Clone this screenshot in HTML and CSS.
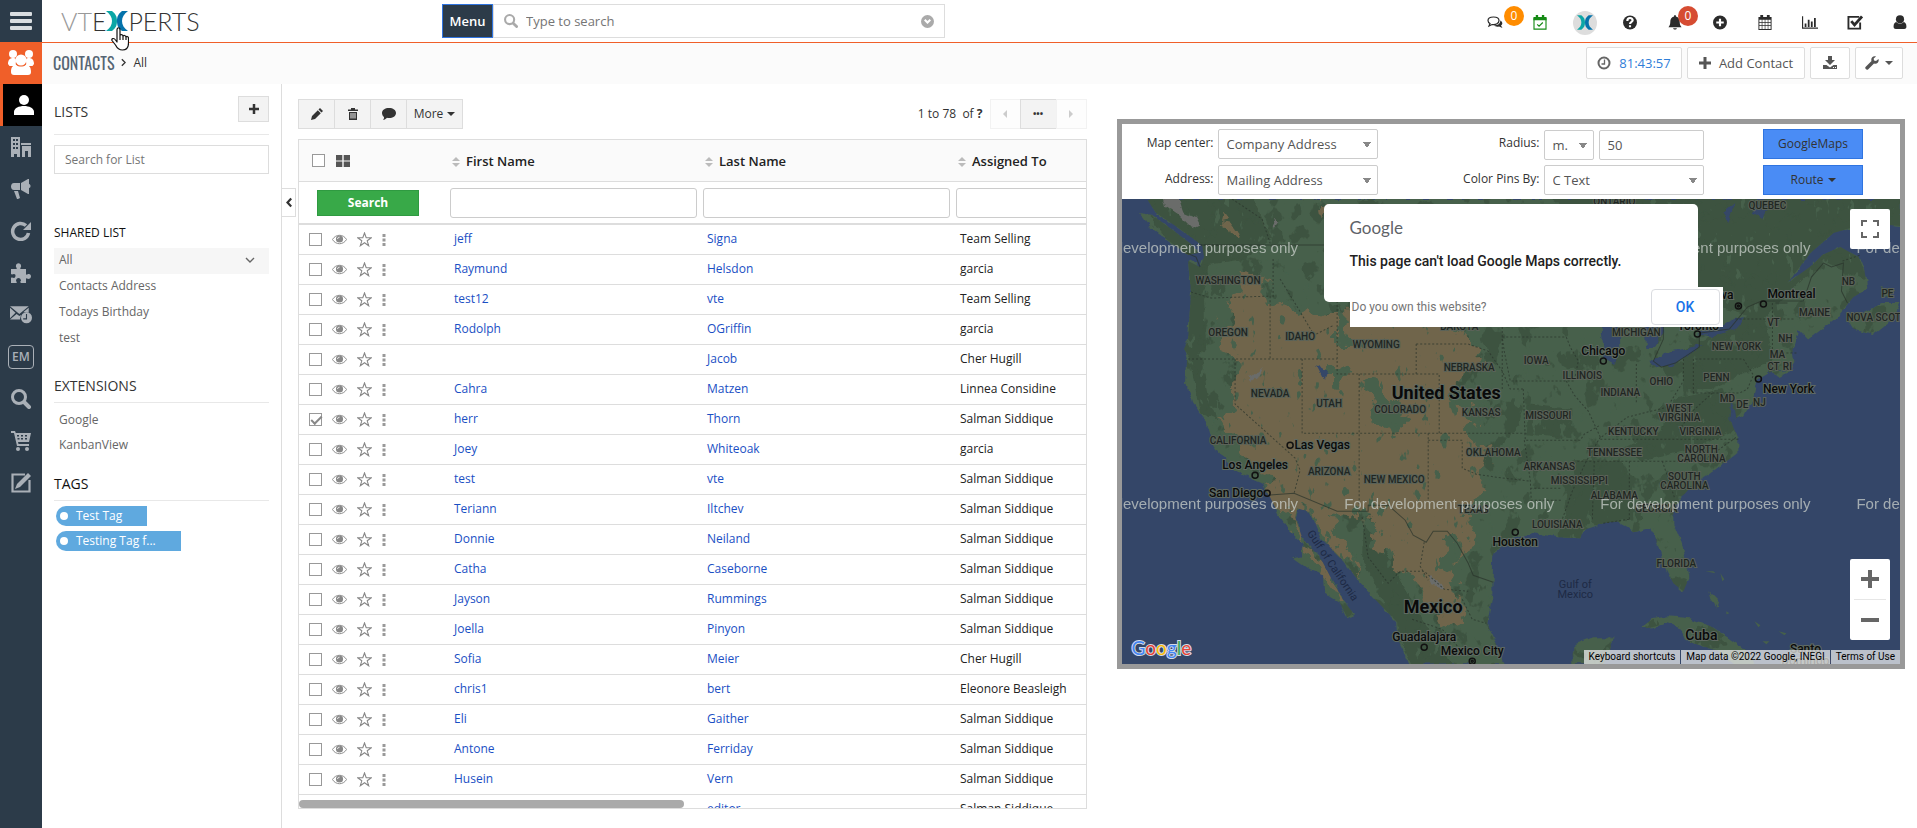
FILE: index.html
```html
<!DOCTYPE html>
<html lang="en">
<head>
    <meta charset="UTF-8">
    <meta name="viewport" content="width=device-width, initial-scale=1.0">
    <title>Contacts - All</title>
    <link rel="stylesheet" href="styles.css">
</head>
<body>
    <!-- Icon sprite -->
    <svg class="sprite" aria-hidden="true">
        <symbol id="i-bars" viewBox="0 0 22 18"><path d="M1 0h20a1 1 0 0 1 1 1v2a1 1 0 0 1-1 1H1a1 1 0 0 1-1-1V1a1 1 0 0 1 1-1zM1 7h20a1 1 0 0 1 1 1v2a1 1 0 0 1-1 1H1a1 1 0 0 1-1-1V8a1 1 0 0 1 1-1zM1 14h20a1 1 0 0 1 1 1v2a1 1 0 0 1-1 1H1a1 1 0 0 1-1-1v-2a1 1 0 0 1 1-1z"/></symbol>
        <symbol id="i-group" viewBox="0 0 26 26"><circle cx="5" cy="4" r="4"/><circle cx="21" cy="4" r="4"/><path d="M0 14c0-4 2-6 5-6s3 1 3 3-1 3 1 5H1.500zM26 14c0-4-2-6-5-6s-3 1-3 3 1 3-1 5h7.500z"/><circle cx="13" cy="10" r="5.500"/><path d="M3 22c0-5 2-7 5-7 3 2 7 2 10 0 3 0 5 2 5 7 0 2-1 3-3 3H6c-2 0-3-1-3-3z"/></symbol>
        <symbol id="i-person" viewBox="0 0 20 20"><circle cx="10" cy="5" r="5"/><path d="M0 20v-3c0-4 5-6 10-6s10 2 10 6v3z"/></symbol>
        <symbol id="i-building" viewBox="0 0 20 20"><path fill-rule="evenodd" d="M0 0h9v20H6v-3H3v3H0zM2 2v2h2V2zm3 0v2h2V2zM2 6v2h2V6zm3 0v2h2V6zm-3 4v2h2v-2zm3 0v2h2v-2zM10 6h10v2H10zM11 9h9v11h-3v-6h-3v6h-3z"/></symbol>
        <symbol id="i-horn" viewBox="0 0 20 20"><path d="M17 0h1v5c2 0 2 4 0 4v6h-1L10 11V4zM3 4h6v7H3C-1 11-1 4 3 4zM3 12h4l2 7-2 1H6z"/></symbol>
        <symbol id="i-redo" viewBox="0 0 20 20"><path fill="none" stroke="currentColor" stroke-width="3.500" d="M17.500 12A8 8 0 1 1 15 4.500"/><path d="M20 1v8h-8z"/></symbol>
        <symbol id="i-puzzle" viewBox="0 0 20 20"><path d="M0 6h5c1 0 1-1 0-2-1-5 6-5 5 0-1 1-1 2 0 2h5v5c0 1 1 1 2 0 4-1 4 5 0 5-1-1-2-1-2 0v4h-5c-1-1-1-2 0-2 0-4-5-4-5 0 1 1 1 2 0 2H0v-5c1-1 2 0 3 0 2-1 2-4 0-4-1 0-2 1-3 0z"/></symbol>
        <symbol id="i-mailclock" viewBox="0 0 20 16"><path d="M0 0h17l-8.500 7zM0 1.500l5 4.500-5 5zM17 1.500V6l-5-.500zM6 7l2.500 2L10 8l-1 4H0z"/><path fill-rule="evenodd" d="M15 5.500a5 5 0 1 1 0 10 5 5 0 0 1 0-10zm.500 1.500h-1v4H12v1h3.500z"/></symbol>
        <symbol id="i-search" viewBox="0 0 20 20"><circle cx="8" cy="8" r="6.500" fill="none" stroke="currentColor" stroke-width="3"/><path stroke="currentColor" stroke-width="4" stroke-linecap="round" d="M13.500 13.500l4.500 4.500"/></symbol>
        <symbol id="i-cart" viewBox="0 0 20 20"><path fill-rule="evenodd" d="M0 0h4l.800 2H20l-2 9H7l.500 2H18v2H6L3 2H0zM6 4v1.500h2V4zm4 0v1.500h2V4zm4 0v1.500h2V4zM6.500 7v1.500h2V7zM10 7v1.500h2V7zm4 0v1.500h2V7z"/><circle cx="7" cy="18" r="2"/><circle cx="16" cy="18" r="2"/></symbol>
        <symbol id="i-edit" viewBox="0 0 20 20"><path fill="none" stroke="currentColor" stroke-width="2.200" d="M14 1.500H1.500v17h17V7"/><path d="M17 0l3 3L9 14l-5 2 2-5z"/></symbol>
        <symbol id="i-x" viewBox="0 0 22 20"><path fill="#0ba6a6" d="M0 0h6c4 3 5 6 5 10s-1 7-5 10H0c4-3 6-6 6-10S4 3 0 0z"/><path fill="#0473ab" d="M22 0h-6c-4 3-5 6-5 10s1 7 5 10h6c-4-3-6-6-6-10s2-7 6-10z"/></symbol>
        <symbol id="i-chat" viewBox="0 0 16 14"><path fill="none" stroke="currentColor" stroke-width="1.200" d="M6.500 1.500C3 1.500 1 3 1 5s1 2.500 2 3l-1 2.500L5 9c4 .500 7-1 7-4 0-2-2-3.500-5.500-3.500z"/><path d="M13.300 5c2 1 3 3.500.700 5l1.500 2.500-3.500-1.500c-2 .500-4 0-5-1 4 0 6.500-2 6.300-5z"/></symbol>
        <symbol id="i-calcheck" viewBox="0 0 16 16"><path fill="none" stroke="currentColor" stroke-width="1.200" d="M1.600 4h12.800v11H1.600zM5 10l2 2L11 8"/><path d="M1 2h14v3.500H1zM3.500 0h2.500v3H3.500zM10 0h2.500v3H10z"/></symbol>
        <symbol id="i-help" viewBox="0 0 14 14"><circle cx="7" cy="7" r="6.500"/><path fill="none" stroke="#fff" stroke-width="2" d="M4.500 5.500C4.500 2 9.500 2 9.500 5c0 1.500-2.500 1.500-2.500 3.500M7 9.500v2"/></symbol>
        <symbol id="i-bell" viewBox="0 0 14 16"><path d="M7 0c1 0 1 1 1 1.500 3 .500 4 3 4 5.500 0 3 .500 4.500 2 6H0c1.500-1.500 2-3 2-6 0-2.500 1-5 4-5.500C6 1 6 0 7 0zM5 14h4c0 2-4 2-4 0z"/></symbol>
        <symbol id="i-pluscircle" viewBox="0 0 14 14"><path fill-rule="evenodd" d="M7 .500a6.500 6.500 0 1 1 0 13 6.500 6.500 0 0 1 0-13zM6 3.500V6H3.500v2H6v2.500h2V8h2.500V6H8V3.500z"/></symbol>
        <symbol id="i-calendar" viewBox="0 0 16 16"><path fill-rule="evenodd" d="M1 2h2V0h3v2h4V0h3v2h2v14H1zm1 3v2.500h2.500V5zm3.200 0v2.500h2.500V5zm3.200 0v2.500h2.500V5zm3.200 0v2.500H14V5zM2 8.300v2.700h2.500V8.300zm3.200 0v2.700h2.500V8.300zm3.200 0v2.700h2.500V8.300zm3.200 0v2.700H14V8.300zM2 11.800V15h2.500v-3.200zm3.200 0V15h2.500v-3.200zm3.200 0V15h2.500v-3.200zm3.200 0V15H14v-3.200z"/></symbol>
        <symbol id="i-chart" viewBox="0 0 18 14"><path d="M0 0h1.300v12.700H18V14H0zM3 8h2v4H3zM6.500 4h2v8h-2zM10 6h2v6h-2zM13.500 2h2v10h-2z"/></symbol>
        <symbol id="i-check" viewBox="0 0 17 16"><path fill="none" stroke="currentColor" stroke-width="2" d="M13 2H1.500v12.500H14V8"/><path fill="none" stroke="currentColor" stroke-width="3" d="M4.500 6.500l3.500 4L16 1.500"/></symbol>
        <symbol id="i-user" viewBox="0 0 14 14"><circle cx="7" cy="4" r="3.800"/><path d="M1 11c0-3 1-4 2.500-4.500 2 2 5 2 7 0C12 7 13 8 13 11c0 1.500-1 2-2 2H3c-1 0-2-.500-2-2z"/></symbol>
        <symbol id="i-clock" viewBox="0 0 14 14"><circle cx="7" cy="7" r="5.500" fill="none" stroke="currentColor" stroke-width="2"/><path fill="none" stroke="currentColor" stroke-width="1.300" d="M7.500 3.500V8H4.500"/></symbol>
        <symbol id="i-plus" viewBox="0 0 12 12"><path d="M4.500 0h3v4.500H12v3H7.500V12h-3V7.500H0v-3h4.500z"/></symbol>
        <symbol id="i-download" viewBox="0 0 14 14"><path fill-rule="evenodd" d="M5 0h4v4h3L7 9 2 4h3zM0 9h3.500L7 11.500 10.500 9H14v4H0zm10 2v1h1v-1zm2 0v1h1v-1z"/></symbol>
        <symbol id="i-wrench" viewBox="0 0 14 14"><path d="M13.500 3L11 5 9 4.500 8.700 2.500 11 .500C8 -.500 5.500 2 6.500 5L.500 11c-1 1.500 1 3.500 2.500 2.500L9 7.500c3 1 5.500-1.500 4.500-4.500z"/></symbol>
        <symbol id="i-pencil" viewBox="0 0 12 12"><path d="M9 0l3 3-1.500 1.500-3-3zM6.800 2.200l3 3L4 11l-4 1 1-4z"/></symbol>
        <symbol id="i-trash" viewBox="0 0 10 12"><path fill-rule="evenodd" d="M3 0h4v1.500h3V3H0V1.500h3zM1 4h8v8H1zm1.500 1v5.500h1V5zm2 0v5.500h1V5zm2 0v5.500h1V5z"/></symbol>
        <symbol id="i-comment" viewBox="0 0 14 12"><path d="M7 0c4 0 7 2 7 5s-3 5-7 5c-1 0-1.500 0-2-.200C4 11 2.500 12 1 12c1-1 1-2 1-3C.700 8 0 6.500 0 5c0-3 3-5 7-5z"/></symbol>
        <symbol id="i-eye" viewBox="0 0 16 11"><path fill="none" stroke="currentColor" d="M.500 5.500C4-.500 12-.500 15.500 5.500 12 11.500 4 11.500.500 5.500z"/><circle cx="8" cy="5" r="3.800"/><path fill="none" stroke="#fff" d="M6 5c0-1.500 1-2 2-2"/></symbol>
        <symbol id="i-star" viewBox="0 0 15 15"><path fill="none" stroke="currentColor" stroke-width="1.100" d="M7.500 1l1.700 4.700 5 .100-4 3 1.500 5-4.200-3-4.200 3 1.500-5-4-3 5-.100z"/></symbol>
        <symbol id="i-dots" viewBox="0 0 4 12"><path d="M.500 0h3v3h-3zM.500 4.500h3v3h-3zM.500 9h3v3h-3z"/></symbol>
        <symbol id="i-grid" viewBox="0 0 14 12"><path d="M0 0h6.300v5.500H0zM7.700 0H14v5.500H7.700zM0 6.500h6.300V12H0zM7.700 6.500H14V12H7.700z"/></symbol>
        <symbol id="i-sort" viewBox="0 0 8 12"><path d="M4 1l4 4H0zM0 7h8l-4 4z"/></symbol>
        <symbol id="i-left" viewBox="0 0 6 10"><path fill="none" stroke="currentColor" stroke-width="2.200" d="M5.200 1L1.500 5l3.700 4"/></symbol>
        <symbol id="i-right" viewBox="0 0 6 10"><path fill="none" stroke="currentColor" stroke-width="1.600" d="M1 1l4 4-4 4"/></symbol>
        <symbol id="i-down" viewBox="0 0 10 6"><path fill="none" stroke="currentColor" stroke-width="1.400" d="M1 1l4 4 4-4"/></symbol>
        <symbol id="i-down-bold" viewBox="0 0 10 7"><path fill="none" stroke="currentColor" stroke-width="3" d="M1 1l4 4 4-4"/></symbol>
    </svg>

    <div class="app">
        <nav class="rail" aria-label="Modules">
            <button class="rail-item" aria-label="Toggle menu"><svg class="ico-22"><use href="#i-bars"/></svg></button>
            <a href="#" class="rail-item app-home" aria-label="Marketing"><svg class="ico-26"><use href="#i-group"/></svg></a>
            <a href="#" class="rail-item active" aria-label="Contacts"><svg class="ico-22"><use href="#i-person"/></svg></a>
            <a href="#" class="rail-item" aria-label="Organizations"><svg class="ico-22"><use href="#i-building"/></svg></a>
            <a href="#" class="rail-item" aria-label="Campaigns"><svg class="ico-22"><use href="#i-horn"/></svg></a>
            <a href="#" class="rail-item" aria-label="Refresh"><svg class="ico-22"><use href="#i-redo"/></svg></a>
            <a href="#" class="rail-item" aria-label="Extensions"><svg class="ico-22"><use href="#i-puzzle"/></svg></a>
            <a href="#" class="rail-item" aria-label="Scheduled mail"><svg class="ico-22"><use href="#i-mailclock"/></svg></a>
            <a href="#" class="rail-item"><span class="em">EM</span></a>
            <a href="#" class="rail-item" aria-label="Search"><svg class="ico-22"><use href="#i-search"/></svg></a>
            <a href="#" class="rail-item" aria-label="Orders"><svg class="ico-22"><use href="#i-cart"/></svg></a>
            <a href="#" class="rail-item" aria-label="Notes"><svg class="ico-22"><use href="#i-edit"/></svg></a>
        </nav>

        <div class="page">
            <header class="topbar">
                <a href="#" class="logo" aria-label="VTExperts">
                    <span class="logo-light">VT</span><span>E</span><svg class="logo-x"><use href="#i-x"/></svg><span>PERTS</span>
                    <svg class="cursor" viewBox="0 0 18 24"><path fill="#fff" stroke="#111" stroke-width="1.200" stroke-linejoin="round" d="M6 15V3c0-3 3-3 3 0v6c0-2 3-2 3 .500C12 8 15 8 15 10.500c0-1.500 2.500-1.500 2.500 1V16c0 4-1.500 7-6 7-4 0-5.500-2-7-5L1 13.500C0 11.500 3 10.500 4.500 13zM9 9v4M12 9.500V13M15 10.500V13"/></svg>
                </a>
                <form class="search">
                    <button type="button" class="menu-btn">Menu</button>
                    <div class="search-box">
                        <svg class="ico-14"><use href="#i-search"/></svg>
                        <input type="text" placeholder="Type to search" aria-label="Type to search">
                        <button type="button" class="search-more" aria-label="Advanced search"><svg><use href="#i-down-bold"/></svg></button>
                    </div>
                </form>
                <div class="tools">
                    <a href="#" aria-label="Chat"><svg><use href="#i-chat"/></svg><span class="badge">0</span></a>
                    <a href="#" class="green" aria-label="Tasks"><svg><use href="#i-calcheck"/></svg></a>
                    <a href="#" class="brand" aria-label="VTExperts store"><svg><use href="#i-x"/></svg></a>
                    <a href="#" aria-label="Help"><svg><use href="#i-help"/></svg></a>
                    <a href="#" aria-label="Notifications"><svg><use href="#i-bell"/></svg><span class="badge red">0</span></a>
                    <a href="#" aria-label="Quick create"><svg><use href="#i-pluscircle"/></svg></a>
                    <a href="#" aria-label="Calendar"><svg><use href="#i-calendar"/></svg></a>
                    <a href="#" aria-label="Reports"><svg><use href="#i-chart"/></svg></a>
                    <a href="#" aria-label="To do"><svg><use href="#i-check"/></svg></a>
                    <a href="#" aria-label="Account"><svg><use href="#i-user"/></svg></a>
                </div>
            </header>

            <div class="subbar">
                <div class="crumbs">
                    <a href="#" class="module">CONTACTS</a>
                    <svg class="crumb-sep"><use href="#i-right"/></svg>
                    <a href="#">All</a>
                </div>
                <div class="actions">
                    <button class="timer"><svg class="ico-14"><use href="#i-clock"/></svg>81:43:57</button>
                    <button class="add"><svg class="ico-12"><use href="#i-plus"/></svg>Add Contact</button>
                    <button class="download" aria-label="Import"><svg class="ico-14"><use href="#i-download"/></svg></button>
                    <button class="wrench" aria-label="Customize"><svg class="ico-14"><use href="#i-wrench"/></svg><span class="caret"></span></button>
                </div>
            </div>

            <div class="body">
                <aside class="sidebar">
                    <div class="side-head">
                        <h2>LISTS</h2>
                        <button class="btn" aria-label="Add list"><svg class="ico-10"><use href="#i-plus"/></svg></button>
                    </div>
                    <input class="side-search" type="text" placeholder="Search for List" aria-label="Search for List">
                    <h3>SHARED LIST</h3>
                    <ul class="side-list">
                        <li class="selected"><a href="#">All</a><svg class="ico-10"><use href="#i-down"/></svg></li>
                        <li><a href="#">Contacts Address</a></li>
                        <li><a href="#">Todays Birthday</a></li>
                        <li><a href="#">test</a></li>
                    </ul>
                    <h2 class="side-title">EXTENSIONS</h2>
                    <ul class="side-list compact">
                        <li><a href="#">Google</a></li>
                        <li><a href="#">KanbanView</a></li>
                    </ul>
                    <h2 class="side-title tags-title">TAGS</h2>
                    <div class="tags">
                        <a href="#" class="tag">Test Tag</a>
                        <a href="#" class="tag">Testing Tag f...</a>
                    </div>
                    <button class="collapse" aria-label="Collapse sidebar"><svg><use href="#i-left"/></svg></button>
                </aside>

                <main class="content">
                    <section class="list">
                        <div class="list-bar">
                            <div class="btn-group">
                                <button class="btn" aria-label="Edit"><svg class="ico-12"><use href="#i-pencil"/></svg></button>
                                <button class="btn" aria-label="Delete"><svg class="ico-12"><use href="#i-trash"/></svg></button>
                                <button class="btn" aria-label="Comment"><svg class="ico-14"><use href="#i-comment"/></svg></button>
                                <button class="btn">More <span class="caret"></span></button>
                            </div>
                            <div class="pager">
                                <span>1 to 78&nbsp; of <b>?</b></span>
                                <div class="btn-group">
                                    <button class="btn" disabled aria-label="Previous page"><span class="arrow prev"></span></button>
                                    <button class="btn" aria-label="Jump to page"><b>•••</b></button>
                                    <button class="btn" disabled aria-label="Next page"><span class="arrow"></span></button>
                                </div>
                            </div>
                        </div>

                        <div class="table-wrap">
                            <table>
                                <colgroup><col class="c-act"><col class="c-name"><col class="c-name"><col class="c-name"></colgroup>
                                <thead>
                                    <tr class="head">
                                        <th><div class="row-tools"><input type="checkbox" aria-label="Select all"><svg class="ico-14"><use href="#i-grid"/></svg></div></th>
                                        <th><svg class="sort"><use href="#i-sort"/></svg>First Name</th>
                                        <th><svg class="sort"><use href="#i-sort"/></svg>Last Name</th>
                                        <th><svg class="sort"><use href="#i-sort"/></svg>Assigned To</th>
                                    </tr>
                                    <tr class="filter">
                                        <td><button class="search-btn">Search</button></td>
                                        <td><input type="text" aria-label="First Name"></td>
                                        <td><input type="text" aria-label="Last Name"></td>
                                        <td><input type="text" aria-label="Assigned To"></td>
                                    </tr>
                                </thead>
                                <tbody>
                                    <tr><td><div class="row-tools"><input type="checkbox" aria-label="Select jeff"><svg class="eye"><use href="#i-eye"/></svg><svg class="star"><use href="#i-star"/></svg><svg class="dots"><use href="#i-dots"/></svg></div></td><td><a href="#">jeff</a></td><td><a href="#">Signa</a></td><td>Team Selling</td></tr>
                                    <tr><td><div class="row-tools"><input type="checkbox" aria-label="Select Raymund"><svg class="eye"><use href="#i-eye"/></svg><svg class="star"><use href="#i-star"/></svg><svg class="dots"><use href="#i-dots"/></svg></div></td><td><a href="#">Raymund</a></td><td><a href="#">Helsdon</a></td><td>garcia</td></tr>
                                    <tr><td><div class="row-tools"><input type="checkbox" aria-label="Select test12"><svg class="eye"><use href="#i-eye"/></svg><svg class="star"><use href="#i-star"/></svg><svg class="dots"><use href="#i-dots"/></svg></div></td><td><a href="#">test12</a></td><td><a href="#">vte</a></td><td>Team Selling</td></tr>
                                    <tr><td><div class="row-tools"><input type="checkbox" aria-label="Select Rodolph"><svg class="eye"><use href="#i-eye"/></svg><svg class="star"><use href="#i-star"/></svg><svg class="dots"><use href="#i-dots"/></svg></div></td><td><a href="#">Rodolph</a></td><td><a href="#">OGriffin</a></td><td>garcia</td></tr>
                                    <tr><td><div class="row-tools"><input type="checkbox" aria-label="Select Jacob"><svg class="eye"><use href="#i-eye"/></svg><svg class="star"><use href="#i-star"/></svg><svg class="dots"><use href="#i-dots"/></svg></div></td><td></td><td><a href="#">Jacob</a></td><td>Cher Hugill</td></tr>
                                    <tr><td><div class="row-tools"><input type="checkbox" aria-label="Select Cahra"><svg class="eye"><use href="#i-eye"/></svg><svg class="star"><use href="#i-star"/></svg><svg class="dots"><use href="#i-dots"/></svg></div></td><td><a href="#">Cahra</a></td><td><a href="#">Matzen</a></td><td>Linnea Considine</td></tr>
                                    <tr><td><div class="row-tools"><input type="checkbox" checked aria-label="Select herr"><svg class="eye"><use href="#i-eye"/></svg><svg class="star"><use href="#i-star"/></svg><svg class="dots"><use href="#i-dots"/></svg></div></td><td><a href="#">herr</a></td><td><a href="#">Thorn</a></td><td>Salman Siddique</td></tr>
                                    <tr><td><div class="row-tools"><input type="checkbox" aria-label="Select Joey"><svg class="eye"><use href="#i-eye"/></svg><svg class="star"><use href="#i-star"/></svg><svg class="dots"><use href="#i-dots"/></svg></div></td><td><a href="#">Joey</a></td><td><a href="#">Whiteoak</a></td><td>garcia</td></tr>
                                    <tr><td><div class="row-tools"><input type="checkbox" aria-label="Select test"><svg class="eye"><use href="#i-eye"/></svg><svg class="star"><use href="#i-star"/></svg><svg class="dots"><use href="#i-dots"/></svg></div></td><td><a href="#">test</a></td><td><a href="#">vte</a></td><td>Salman Siddique</td></tr>
                                    <tr><td><div class="row-tools"><input type="checkbox" aria-label="Select Teriann"><svg class="eye"><use href="#i-eye"/></svg><svg class="star"><use href="#i-star"/></svg><svg class="dots"><use href="#i-dots"/></svg></div></td><td><a href="#">Teriann</a></td><td><a href="#">Iltchev</a></td><td>Salman Siddique</td></tr>
                                    <tr><td><div class="row-tools"><input type="checkbox" aria-label="Select Donnie"><svg class="eye"><use href="#i-eye"/></svg><svg class="star"><use href="#i-star"/></svg><svg class="dots"><use href="#i-dots"/></svg></div></td><td><a href="#">Donnie</a></td><td><a href="#">Neiland</a></td><td>Salman Siddique</td></tr>
                                    <tr><td><div class="row-tools"><input type="checkbox" aria-label="Select Catha"><svg class="eye"><use href="#i-eye"/></svg><svg class="star"><use href="#i-star"/></svg><svg class="dots"><use href="#i-dots"/></svg></div></td><td><a href="#">Catha</a></td><td><a href="#">Caseborne</a></td><td>Salman Siddique</td></tr>
                                    <tr><td><div class="row-tools"><input type="checkbox" aria-label="Select Jayson"><svg class="eye"><use href="#i-eye"/></svg><svg class="star"><use href="#i-star"/></svg><svg class="dots"><use href="#i-dots"/></svg></div></td><td><a href="#">Jayson</a></td><td><a href="#">Rummings</a></td><td>Salman Siddique</td></tr>
                                    <tr><td><div class="row-tools"><input type="checkbox" aria-label="Select Joella"><svg class="eye"><use href="#i-eye"/></svg><svg class="star"><use href="#i-star"/></svg><svg class="dots"><use href="#i-dots"/></svg></div></td><td><a href="#">Joella</a></td><td><a href="#">Pinyon</a></td><td>Salman Siddique</td></tr>
                                    <tr><td><div class="row-tools"><input type="checkbox" aria-label="Select Sofia"><svg class="eye"><use href="#i-eye"/></svg><svg class="star"><use href="#i-star"/></svg><svg class="dots"><use href="#i-dots"/></svg></div></td><td><a href="#">Sofia</a></td><td><a href="#">Meier</a></td><td>Cher Hugill</td></tr>
                                    <tr><td><div class="row-tools"><input type="checkbox" aria-label="Select chris1"><svg class="eye"><use href="#i-eye"/></svg><svg class="star"><use href="#i-star"/></svg><svg class="dots"><use href="#i-dots"/></svg></div></td><td><a href="#">chris1</a></td><td><a href="#">bert</a></td><td>Eleonore Beasleigh</td></tr>
                                    <tr><td><div class="row-tools"><input type="checkbox" aria-label="Select Eli"><svg class="eye"><use href="#i-eye"/></svg><svg class="star"><use href="#i-star"/></svg><svg class="dots"><use href="#i-dots"/></svg></div></td><td><a href="#">Eli</a></td><td><a href="#">Gaither</a></td><td>Salman Siddique</td></tr>
                                    <tr><td><div class="row-tools"><input type="checkbox" aria-label="Select Antone"><svg class="eye"><use href="#i-eye"/></svg><svg class="star"><use href="#i-star"/></svg><svg class="dots"><use href="#i-dots"/></svg></div></td><td><a href="#">Antone</a></td><td><a href="#">Ferriday</a></td><td>Salman Siddique</td></tr>
                                    <tr><td><div class="row-tools"><input type="checkbox" aria-label="Select Husein"><svg class="eye"><use href="#i-eye"/></svg><svg class="star"><use href="#i-star"/></svg><svg class="dots"><use href="#i-dots"/></svg></div></td><td><a href="#">Husein</a></td><td><a href="#">Vern</a></td><td>Salman Siddique</td></tr>
                                    <tr><td></td><td></td><td><a href="#">editor</a></td><td>Salman Siddique</td></tr>
                                </tbody>
                            </table>
                            <div class="scrollbar"></div>
                        </div>
                    </section>

                    <section class="map-panel">
                        <form class="map-form">
                            <label for="center">Map center:</label>
                            <select id="center"><option>Company Address</option></select>
                            <label for="radius">Radius:</label>
                            <div class="radius">
                                <select aria-label="Unit"><option>m.</option></select>
                                <input id="radius" type="text" value="50">
                            </div>
                            <button type="button" class="blue">GoogleMaps</button>
                            <label for="address">Address:</label>
                            <select id="address"><option>Mailing Address</option></select>
                            <label for="pins">Color Pins By:</label>
                            <select id="pins"><option>C Text</option></select>
                            <button type="button" class="blue">Route <span class="caret"></span></button>
                        </form>

                        <div class="map">
                            <svg class="map-canvas" viewBox="0 0 778 465" role="img" aria-label="Map of North America">
                                <defs>
                                    <filter id="rough" x="-5%" y="-5%" width="110%" height="110%"><feTurbulence type="fractalNoise" baseFrequency="0.09" numOctaves="3" seed="4"/><feDisplacementMap in="SourceGraphic" scale="7" xChannelSelector="R" yChannelSelector="G"/></filter>
                                    <filter id="ragged" x="-10%" y="-10%" width="120%" height="120%"><feTurbulence type="fractalNoise" baseFrequency="0.05" numOctaves="4" seed="9"/><feDisplacementMap in="SourceGraphic" scale="34" xChannelSelector="R" yChannelSelector="G"/></filter>
                                    <!-- noise cut to hard-edged patches of the source colour -->
                                    <filter id="patches" x="0" y="0" width="100%" height="100%"><feTurbulence type="fractalNoise" baseFrequency="0.05 0.04" numOctaves="4" seed="21"/><feColorMatrix values="0 0 0 0 0  0 0 0 0 0  0 0 0 0 0  20 0 0 0 -11.500"/><feComposite in="SourceGraphic" operator="in"/></filter>
                                    <filter id="specks" x="0" y="0" width="100%" height="100%"><feTurbulence type="fractalNoise" baseFrequency="0.11 0.06" numOctaves="3" seed="33"/><feColorMatrix values="0 0 0 0 0  0 0 0 0 0  0 0 0 0 0  0 20 0 0 -13.800"/><feComposite in="SourceGraphic" operator="in"/></filter>
                                    <clipPath id="land"><path id="coast" d="M25 0L34 14 52 26 66 36 80 46 82 58 78 68 66 62 69 93 66 141 62 150 65 161 64 184 70 204 85 224 91 244 105 263 121 276 140 284 147 296 158 318 165 329 180 344 181 357 171 359 188 371 201 376 202 394 218 404 225 418 232 415 221 401 210 381 198 358 181 341 173 318 175 309 188 313 201 341 221 361 236 381 251 398 275 423 276 441 285 458 288 465H383L376 451 365 424 370 398 371 354 388 340 411 334 435 338 458 339 461 331 481 324 496 323 511 333 528 329 538 351 541 364 551 384 561 392 567 378 561 348 551 324 551 308 568 288 588 274 615 254 615 238 608 221 622 216 631 198 635 181 650 172 668 170 672 164 670 151 676 131 685 141 711 121 721 110 731 98 745 90 742 72 736 58 718 48 700 56 690 66 665 84 688 54 711 34 745 24 778 27V0zM18 14L30 16 52 32 70 46 76 54 66 56 44 40 28 28zM725 122L745 112 760 104 778 104 770 120 750 136 730 130zM650 173L672 170 656 178zM758 88L772 92 764 98zM518 429L530 420 545 417 568 419 590 428 608 440 628 454 632 465H612L596 452 568 443 560 430 545 424 530 428zM450 465L450 446 471 438 490 438 488 450 481 465zM586 392L596 402 594 408 588 400z"/></clipPath>
                                </defs>
                                <rect width="778" height="465" fill="#344668"/>
                                <use href="#coast" fill="#46604b" filter="url(#rough)"/>
                                <g clip-path="url(#land)">
                                    <path fill="#3c523f" filter="url(#rough)" d="M15 0H130L150 40 120 60 86 66 82 100 84 150 70 160 60 150V60zM66 150L80 158 86 200 96 222 78 214zM430 0H778V100L700 60 640 120 540 90zM550 200L600 190 612 230 570 250 520 262 500 250 540 230zM450 262L500 262 520 320 440 330zM405 205L450 210 450 240 405 235zM241 325L262 350 300 420 330 465H290L270 420 240 360zM560 150L640 110 650 160 590 190 560 190z"/>
                                    <rect width="778" height="465" fill="#3c523f" filter="url(#patches)"/>
                                    <path fill="#46604b" filter="url(#specks)" d="M0 0H778V465H0z"/>
                                    <path fill="#70654b" filter="url(#ragged)" d="M118 74L140 76 150 104 196 118 216 108 230 110 300 120 340 135 360 160 325 190 350 215 345 240 370 250 352 290 340 325 350 350 330 360 335 380 345 430 320 425 292 385 262 352 246 318 205 312 224 350 240 378 218 360 192 318 176 305 178 340 200 362 228 410 214 400 196 372 176 340 146 292 156 280 130 262 92 216 106 220 110 160 100 140 104 118zM100 20L116 22 112 40 104 36zM196 0H210L200 20z"/>
                                    <path fill="#46604b" filter="url(#ragged)" d="M240 182L262 184 276 212 290 226 270 234 250 220zM208 168L222 170 218 184 208 182zM216 100L228 120 224 150 216 150zM320 340L336 344 330 372 318 364z"/>
                                    <path fill="#46604b" filter="url(#specks)" d="M90 50H380V440H150L140 300 90 220z"/>
                                    <path fill="#6b6c6b" filter="url(#rough)" d="M42 0H56L60 12 74 18 78 26 70 30 56 16 44 8zM128 178L142 166 136 178 128 184zM306 376L320 384 322 390 310 386zM150 18L156 24 152 30z"/>
                                    <g fill="#344668" filter="url(#rough)">
                                        <path d="M478 116L496 112 497 150 492 166 482 160zM521 116L540 116 542 134 532 150 524 150zM528 162L542 154 560 150 580 146 570 154 550 166 534 168zM574 134L590 130 612 120 622 118 612 130 592 137zM194 166L204 172 202 182zM610 196L613 222 608 222zM640 0L648 4 640 20 630 14z"/>
                                        <path d="M560 20L566 40 572 70 566 60zM600 14L612 4 606 24zM520 80L540 84 530 96z"/>
                                    </g>
                                </g>
                                <g fill="#46604b"><path d="M583 372h8l2 2zM598 374l4 6-2 2zM604 412l3 2-3 1zM632 422l6 4-2 2zM640 442h7l-3 3zM656 432l8 2-2 2z"/></g>
                                <g class="borders">
                                    <path d="M69 93l20 6 59-2v63M66 160h149M113 160v45l60 54 5 12-6 23M180 160v74h224M215 70v105h102v59M294 145v30M294 145h52l20 7 14 20 8 18h14M237 175v137M306 234v66M306 241h34v28l14 6 20 3 34 4M380 138h64l4 10 8 14-4 20h-64l-6-30zM401 190l2 51h55l4-6 16-9M402 241l6 40 1 20h30M444 182l8 14 14 16 12 26M478 240h138M455 262h125l34-24M478 238l-14 24-14 30-10 28M507 262v58M472 262l-2 58M540 262l12 36M514 165v40M561 160v22l-16 26-40 10-26 20M571 194v-34h50l10 16-6 14-8 4zM590 194l-20 18-14 20M380 128v62M151 60v40M158 80l16 26 18 30 20-10M66 46h30M408 289h32M481 324l26-4M513 312h38M613 120h60M650 104v50h24M720 62l18-6M240 318l6 40 20 26 12-12h24l20 18 24 2M302 343l-4 24 8 14M340 400l10 20 14 4M290 420l30 10 20 22M110 0l30 20 10 30"/>
                                    <path class="solid" d="M76 46h150M147 296l25-2 43 18h31v-6h20l17 15 8 15 13 7 7-11h14l10 12 11 20 5 12 20 7M60 52l14 6 4 10M541 118v22l-10 22 8 6 14-4 24-16 0-14 30-4 18-22 14-6h42l8-24 12-14 8 4 12-4-2 28 6 12M665 104l-12 0"/>
                                </g>

                                <g class="state">
                                    <text x="492" y="6">ONTARIO</text><text x="645" y="10">QUEBEC</text>
                                    <text x="106" y="85">WASHINGTON</text><text x="106" y="137">OREGON</text><text x="178" y="141">IDAHO</text>
                                    <text x="254" y="149">WYOMING</text><text x="337" y="131">DAKOTA</text><text x="347" y="172">NEBRASKA</text>
                                    <text x="148" y="198">NEVADA</text><text x="207" y="208">UTAH</text><text x="278" y="214">COLORADO</text>
                                    <text x="359" y="217">KANSAS</text><text x="116" y="245">CALIFORNIA</text><text x="207" y="276">ARIZONA</text>
                                    <text x="272" y="284">NEW MEXICO</text><text x="371" y="257">OKLAHOMA</text><text x="351" y="314">TEXAS</text>
                                    <text x="435" y="329">LOUISIANA</text><text x="427" y="271">ARKANSAS</text><text x="457" y="285">MISSISSIPPI</text>
                                    <text x="492" y="300">ALABAMA</text><text x="534" y="313">GEORGIA</text>
                                    <text x="562" y="281">SOUTH</text><text x="562" y="290">CAROLINA</text>
                                    <text x="579" y="254">NORTH</text><text x="579" y="263">CAROLINA</text>
                                    <text x="492" y="257">TENNESSEE</text><text x="511" y="236">KENTUCKY</text><text x="578" y="236">VIRGINIA</text>
                                    <text x="557" y="213">WEST</text><text x="557" y="222">VIRGINIA</text><text x="426" y="220">MISSOURI</text>
                                    <text x="498" y="197">INDIANA</text><text x="460" y="180">ILLINOIS</text><text x="414" y="165">IOWA</text>
                                    <text x="539" y="186">OHIO</text><text x="594" y="182">PENN</text><text x="605" y="203">MD</text>
                                    <text x="620" y="209">DE</text><text x="637" y="207">NJ</text><text x="614" y="151">NEW YORK</text>
                                    <text x="655" y="159">MA</text><text x="651" y="171">CT</text><text x="665" y="171">RI</text>
                                    <text x="663" y="143">NH</text><text x="651" y="127">VT</text><text x="514" y="137">MICHIGAN</text>
                                    <text x="692" y="117">MAINE</text><text x="726" y="86">NB</text><text x="765" y="98">PE</text>
                                    <text x="756" y="122">NOVA SCOTIA</text><text x="554" y="368">FLORIDA</text>
                                </g>
                                <g class="city">
                                    <text x="200" y="250">Las Vegas</text><text x="133" y="270">Los Angeles</text><text x="114" y="298">San Diego</text>
                                    <text x="393" y="347">Houston</text><text x="302" y="442">Guadalajara</text><text x="350" y="456">Mexico City</text>
                                    <text x="481" y="156">Chicago</text><text x="666" y="194">New York</text><text x="576" y="131">Toronto</text>
                                    <text x="592" y="100">Ottawa</text><text x="669" y="99">Montreal</text>
                                    <text x="683" y="454">Santo</text><text x="683" y="466">Domingo</text>
                                    <text x="579" y="441" class="island">Cuba</text>
                                    <text x="324" y="200" class="country">United States</text><text x="311" y="414" class="country">Mexico</text>
                                </g>
                                <g class="dot">
                                    <circle cx="168" cy="246" r="3"/><circle cx="133" cy="276" r="3"/><circle cx="145" cy="294" r="3"/>
                                    <circle cx="393" cy="333" r="3"/><circle cx="302" cy="448" r="3"/><circle cx="350" cy="462" r="3"/><circle cx="350" cy="462" r="1"/>
                                    <circle cx="481" cy="162" r="3"/><circle cx="636" cy="180" r="3"/><circle cx="575" cy="135" r="3"/>
                                    <circle cx="616" cy="107" r="3"/><circle cx="616" cy="107" r="1"/><circle cx="641" cy="105" r="3"/>
                                </g>
                                <g class="sea">
                                    <text x="453" y="389">Gulf of</text><text x="453" y="399">Mexico</text>
                                    <text x="211" y="370" transform="rotate(56 211 366)">Gulf of California</text>
                                </g>
                                <g class="watermark">
                                    <text x="-34" y="54">For development purposes only</text>
                                    <text x="478" y="54">For development purposes only</text>
                                    <text x="734" y="54">For development purposes only</text>
                                    <text x="-34" y="310">For development purposes only</text>
                                    <text x="222" y="310">For development purposes only</text>
                                    <text x="478" y="310">For development purposes only</text>
                                    <text x="734" y="310">For development purposes only</text>
                                </g>
                            </svg>

                            <div class="dialog" role="dialog" aria-label="Google Maps error">
                                <div class="dialog-logo">Google</div>
                                <p>This page can't load Google Maps correctly.</p>
                                <div class="dialog-foot">
                                    <a href="#">Do you own this website?</a>
                                    <button>OK</button>
                                </div>
                            </div>
                            <button class="fullscreen" aria-label="Toggle fullscreen"><svg viewBox="0 0 18 18"><path d="M0 0h6v2H2v4H0zM12 0h6v6h-2V2h-4zM0 12h2v4h4v2H0zM16 12h2v6h-6v-2h4z"/></svg></button>
                            <div class="zoom">
                                <button aria-label="Zoom in"><svg viewBox="0 0 18 18"><path d="M7 0h4v7h7v4h-7v7H7v-7H0V7h7z"/></svg></button>
                                <button aria-label="Zoom out"><svg viewBox="0 0 18 18"><path d="M0 7h18v4H0z"/></svg></button>
                            </div>
                            <a href="#" class="google"><span class="g-blue">G</span><span class="g-red">o</span><span class="g-yellow">o</span><span class="g-blue">g</span><span class="g-green">l</span><span class="g-red">e</span></a>
                            <div class="legal">
                                <button>Keyboard shortcuts</button>
                                <span>Map data ©2022 Google, INEGI</span>
                                <a href="#">Terms of Use</a>
                            </div>
                        </div>
                    </section>
                </main>
            </div>
        </div>
    </div>
</body>
</html>
```
FILE: styles.css
```css
:root {
    --navy: #2c3b49;
    --orange: #f05f29;
    --border: #dddddd;
    --link: #1a4fc4;
    --text: #333333;
    --muted: #666666;
}

* {
    box-sizing: border-box;
}

body {
    margin: 0;
    font-family: "Open Sans", sans-serif;
    font-size: 13px;
    line-height: 18px;
    color: var(--text);
    background: #fff;
}

a {
    color: inherit;
    text-decoration: none;
}

button, input, select {
    font: inherit;
    color: inherit;
    margin: 0;
}

button {
    display: inline-flex;
    align-items: center;
    justify-content: center;
    padding: 0;
    cursor: pointer;
}

svg {
    fill: currentColor;
    flex: none;
}

ul {
    list-style: none;
    margin: 0;
    padding: 0;
}

.sprite {
    display: none;
}

.ico-10 { width: 10px; height: 10px; }
.ico-12 { width: 12px; height: 12px; }
.ico-14 { width: 14px; height: 14px; }
.ico-22 { width: 22px; height: 20px; }
.ico-26 { width: 26px; height: 26px; }

.caret {
    border: 4px solid transparent;
    border-top-color: currentColor;
    border-bottom: 0;
    margin-left: 4px;
}

.app {
    display: flex;
    height: 100vh;
    overflow: hidden;
}

/* Module rail */
.rail {
    width: 42px;
    flex: none;
    background: var(--navy);
    color: #aab0b7;
}

.rail-item {
    display: flex;
    align-items: center;
    justify-content: center;
    width: 100%;
    height: 42px;
    border: 0;
    background: none;
}

button.rail-item {
    color: #d9dde0;
}

.rail-item.app-home {
    background: var(--orange);
    color: #fff;
}

.rail-item.active {
    background: #000;
    color: #fff;
    border-left: 3px solid var(--orange);
    padding-left: 3px;
}

.em {
    border: 1px solid currentColor;
    border-radius: 4px;
    padding: 2px 3px;
    font-size: 12px;
    font-weight: 600;
}

.page {
    flex: 1;
    min-width: 0;
    display: flex;
    flex-direction: column;
}

/* Top bar */
.topbar {
    display: flex;
    height: 43px;
    flex: none;
    border-bottom: 1px solid var(--orange);
}

.logo {
    position: relative;
    display: flex;
    align-items: center;
    width: 400px;
    padding-left: 19px;
    font-family: Lato, sans-serif;
    font-size: 25px;
    font-weight: 300;
    line-height: 42px;
    color: #333;
}

.logo-light {
    color: #999;
}

.logo-x {
    width: 22px;
    height: 20px;
}

.cursor {
    position: absolute;
    left: 69px;
    top: 27px;
    width: 18px;
    height: 24px;
}

.search {
    display: flex;
    flex: 0 1 503px;
    margin: 4px 0;
}

.menu-btn {
    width: 51px;
    border: 1px solid #2f74e0;
    background: var(--navy);
    color: #fff;
    font-weight: 600;
}

.search-box {
    flex: 1;
    display: flex;
    align-items: center;
    border: 1px solid var(--border);
    padding: 0 10px;
    color: #aaa;
}

.search-box input {
    flex: 1;
    border: 0;
    padding: 0 8px;
    outline: none;
}

::placeholder {
    color: #757575;
    opacity: 1;
}

.search-more {
    width: 13px;
    height: 13px;
    border: 0;
    border-radius: 50%;
    background: #aaa;
    color: #fff;
}

.search-more svg {
    width: 7px;
    height: 5px;
}

.tools {
    display: flex;
    align-items: center;
    gap: 29px;
    margin-left: auto;
    padding: 4px 9px 0 0;
}

.tools a {
    position: relative;
    display: flex;
    width: 16px;
    height: 16px;
    color: #2b2b2b;
}

.tools svg {
    width: 16px;
    height: 15px;
}

.tools .green {
    color: #158a15;
}

.tools .brand {
    border-radius: 50%;
    background: #ddd;
    box-shadow: 0 0 0 4px #ddd;
}

.badge {
    position: absolute;
    left: 17px;
    top: -9px;
    width: 20px;
    height: 20px;
    border-radius: 10px;
    background: #ff8c00;
    color: #fff;
    font-size: 12px;
    line-height: 20px;
    text-align: center;
}

.badge.red {
    left: 11px;
    background: #d64c32;
}

/* Breadcrumb bar */
.subbar {
    display: flex;
    align-items: center;
    justify-content: space-between;
    height: 41px;
    flex: none;
    padding: 0 14px 2px 11px;
    background: #fbfbfb;
}

.crumbs {
    display: flex;
    align-items: center;
    gap: 7px;
    font-size: 12px;
}

.module {
    font-family: Oswald, "Liberation Sans Narrow", "Roboto Condensed", "Open Sans", sans-serif;
    font-size: 16px;
    color: #566573;
}

.crumb-sep {
    width: 5px;
    height: 9px;
}

.actions {
    display: flex;
    gap: 5px;
}

.actions button {
    height: 32px;
    gap: 8px;
    border: 1px solid var(--border);
    border-radius: 2px;
    background: #fff;
    color: #555;
}

.actions .timer { width: 96px; color: #2f7ed8; }
.actions .timer svg { color: #666; }
.actions .add { width: 118px; }
.actions .download { width: 40px; }
.actions .wrench { width: 48px; gap: 2px; }

/* Sidebar */
.body {
    flex: 1;
    min-height: 0;
    display: flex;
}

.sidebar {
    position: relative;
    width: 240px;
    flex: none;
    padding: 12px 12px 0;
    border-right: 1px solid var(--border);
}

.side-head {
    display: flex;
    justify-content: space-between;
    height: 39px;
    border-bottom: 1px solid #e8e8e8;
}

.side-head .btn {
    width: 31px;
    height: 26px;
}

h2, h3 {
    margin: 0;
    font-weight: 400;
}

h2 {
    font-size: 14px;
    line-height: 32px;
}

h3 {
    font-size: 12px;
    line-height: 18px;
    color: #111;
    padding: 50px 0 6px;
}

.side-search {
    display: block;
    width: 100%;
    height: 29px;
    margin-top: 10px;
    padding: 0 10px;
    border: 1px solid var(--border);
    font-size: 12px;
}

.side-list li {
    display: flex;
    align-items: center;
    justify-content: space-between;
    height: 26px;
    padding: 0 14px 2px 5px;
    color: var(--muted);
    font-size: 12px;
}

.side-list.compact li {
    height: 25px;
}

.side-list .selected {
    background: #f6f6f6;
}

.side-title {
    margin: 18px 0 5px;
    border-bottom: 1px solid #e8e8e8;
}

.tags-title {
    margin-top: 10px;
    margin-bottom: 3px;
    color: #111;
}

.tags {
    display: flex;
    flex-direction: column;
    align-items: flex-start;
    gap: 5px;
    padding: 2px;
}

.tag {
    display: flex;
    align-items: center;
    height: 20px;
    padding: 0 25px 0 4px;
    border-radius: 10px 0 0 10px;
    background: #5fa9df;
    color: #fff;
    font-size: 12px;
}

.tag::before {
    content: "";
    width: 8px;
    height: 8px;
    margin-right: 8px;
    border-radius: 50%;
    background: #fff;
}

.collapse {
    position: absolute;
    left: 100%;
    top: 104px;
    width: 15px;
    height: 29px;
    border: 1px solid var(--border);
    background: #fff;
}

.collapse svg {
    width: 6px;
    height: 11px;
}

/* List view */
.content {
    flex: 1;
    min-width: 0;
    display: grid;
    grid-template-columns: minmax(0, 1fr) minmax(0, 1fr);
    gap: 30px;
    padding: 15px 12px 19px 16px;
}

.list {
    display: flex;
    flex-direction: column;
    min-height: 0;
}

.list-bar {
    display: flex;
    justify-content: space-between;
    height: 30px;
    margin-bottom: 10px;
    font-size: 12px;
}

.btn {
    border: 1px solid var(--border);
    background: #f3f3f3;
}

.btn-group {
    display: flex;
}

.btn-group .btn {
    width: 37px;
    height: 30px;
    margin-right: -1px;
}

.btn-group .btn:last-child {
    margin-right: 0;
}

.list-bar > .btn-group .btn:last-child {
    width: 57px;
}

.btn:disabled {
    background: #fdfdfd;
    border-color: #f2f2f2;
}

.btn-group .btn b {
    font-size: 9px;
}

.pager {
    display: flex;
    align-items: center;
    gap: 7px;
}

.pager .btn:disabled {
    width: 31px;
}

.arrow {
    border: 4px solid transparent;
    border-left-color: #ccc;
    border-right: 0;
}

.arrow.prev {
    border-right: 4px solid #ccc;
    border-left: 0;
}

.table-wrap {
    position: relative;
    flex: 1;
    min-height: 0;
    overflow: hidden;
    border: 1px solid var(--border);
}

table {
    width: 907px;
    table-layout: fixed;
    border-collapse: separate;
    border-spacing: 0;
}

.c-act { width: 148px; }
.c-name { width: 253px; }

th, td {
    padding: 0 7px;
    text-align: left;
    border-bottom: 1px solid var(--border);
}

.head th {
    height: 42px;
    padding-left: 5px;
    background: #fafafa;
    font-weight: 600;
    color: #222;
}

.head th:first-child {
    padding-left: 13px;
}

.filter td {
    height: 43px;
    padding: 0 3px;
    border-bottom-width: 2px;
}

.filter input {
    display: block;
    width: 247px;
    height: 30px;
    border: 1px solid #ccc;
    border-radius: 3px;
}

.search-btn {
    width: 102px;
    height: 26px;
    margin-left: 15px;
    border: 1px solid #2f9a41;
    background: #38a948;
    color: #fff;
    font-size: 12px;
    font-weight: 700;
}

.sort {
    width: 8px;
    height: 12px;
    margin-right: 6px;
    vertical-align: -2px;
    color: #bbb;
}

tbody td {
    height: 30px;
    padding-bottom: 2px;
    color: #222;
    font-size: 12px;
}

tbody td:first-child {
    padding-left: 10px;
    padding-bottom: 0;
}

tbody a {
    color: var(--link);
}

.row-tools {
    display: flex;
    align-items: center;
    gap: 10px;
    color: #888;
}

.head .row-tools {
    gap: 11px;
    color: #555;
}

.row-tools input {
    appearance: none;
    width: 13px;
    height: 13px;
    border: 1px solid #999;
    background: #fff;
}

.row-tools input:checked::before {
    content: "";
    display: block;
    width: 9px;
    height: 4px;
    margin: 2px 1px;
    border: 2px solid #888;
    border-width: 0 0 2px 2px;
    transform: rotate(-45deg);
}

.eye { width: 15px; height: 11px; }
.star { width: 15px; height: 15px; }
.dots { width: 4px; height: 12px; color: #999; }

.scrollbar {
    position: absolute;
    left: 0;
    bottom: 0;
    width: 49%;
    height: 8px;
    border-radius: 4px;
    background: #aaa;
}

/* Map panel */
.map-panel {
    align-self: start;
    margin-top: 20px;
    border: 5px solid #999;
}

.map-form {
    display: grid;
    grid-template-columns: 96px 160px 166px 160px 1fr 100px 37px;
    grid-template-rows: 30px 30px;
    gap: 6px 0;
    padding: 5px 0 4px;
}

.map-form label {
    padding: 5px 4px 0 0;
    text-align: right;
    font-size: 12px;
}

.map-form .blue {
    grid-column: 6 / 8;
    width: 100px;
}

.map-form select, .map-form input {
    height: 30px;
    min-width: 0;
    border: 1px solid #ccc;
    border-radius: 2px;
    background: #fff;
    padding: 0 8px;
    color: #555;
}

/* down arrow cut from two diagonal gradients */
.map-form select {
    appearance: none;
    background: linear-gradient(to top right, transparent 50%, #888 51%) no-repeat right 10px top 12px / 4px 6px,
                linear-gradient(to top left, transparent 50%, #888 51%) no-repeat right 6px top 12px / 4px 6px #fff;
}

.radius {
    display: flex;
    gap: 5px;
    padding-top: 1px;
}

.radius select {
    width: 50px;
}

.radius input {
    flex: 1;
    width: 0;
}

.blue {
    border: 1px solid #2f74e0;
    background: #4a8cf5;
    color: #333;
    font-size: 12px;
}

.map {
    position: relative;
    overflow: hidden;
    font-family: Roboto, sans-serif;
}

.map-canvas {
    display: block;
    width: 100%;
}

.borders path {
    fill: none;
    stroke: #2a332b;
    stroke-width: 1;
    stroke-dasharray: 2 2;
    opacity: 0.7;
}

.borders .solid {
    stroke-dasharray: none;
}

.state, .city, .sea {
    text-anchor: middle;
}

.state {
    font-size: 10px;
    font-weight: 500;
    fill: #1f2622;
    stroke: #5a6258;
    stroke-width: 2px;
    paint-order: stroke;
}

.city {
    font-size: 12px;
    font-weight: 500;
    fill: #0a0a0a;
    stroke: #5f6a62;
    stroke-width: 2px;
    paint-order: stroke;
}

.city .country { font-size: 18px; font-weight: 700; }
.city .island { font-size: 14px; }

.sea {
    font-size: 11px;
    fill: #1e2a45;
}

.dot circle {
    fill: none;
    stroke: #111;
    stroke-width: 1.5px;
}

.watermark {
    font-family: "Liberation Sans", sans-serif;
    font-size: 15px;
    fill: #c9cfca;
    opacity: 0.75;
}

.dialog {
    position: absolute;
    left: 202px;
    top: 5px;
    width: 374px;
    height: 98px;
    padding: 14px 0 0 26px;
    border-radius: 5px;
    background: #fff;
}

.dialog-logo {
    font-family: Lato, sans-serif;
    font-size: 17px;
    line-height: 20px;
    color: #5f6368;
}

.dialog p {
    margin: 12px 0 15px;
    font-size: 14px;
    line-height: 22px;
    font-weight: 500;
    color: #212121;
}

.dialog-foot {
    display: flex;
    align-items: center;
    justify-content: space-between;
    width: 373px;
    height: 40px;
    padding: 0 3px 0 2px;
    background: #fff;
    font-size: 12px;
    color: #757575;
}

.dialog-foot button {
    width: 69px;
    height: 36px;
    border: 1px solid #dadce0;
    border-radius: 4px;
    background: #fff;
    color: #1a73e8;
    font-size: 14px;
    font-weight: 500;
}

.fullscreen {
    position: absolute;
    right: 10px;
    top: 10px;
    width: 40px;
    height: 40px;
    border: 0;
    border-radius: 2px;
    background: #fff;
    color: #666;
}

.fullscreen svg, .zoom svg {
    width: 18px;
    height: 18px;
}

.zoom {
    position: absolute;
    right: 10px;
    bottom: 24px;
    width: 40px;
    padding: 0 4px;
    border-radius: 2px;
    background: #fff;
    color: #666;
}

.zoom button {
    width: 32px;
    height: 40px;
    border: 0;
    background: none;
}

.zoom button + button {
    height: 41px;
    border-top: 1px solid #e6e6e6;
}

.google {
    position: absolute;
    left: 10px;
    bottom: 4px;
    font-family: Lato, sans-serif;
    font-size: 19px;
    line-height: 24px;
    -webkit-text-stroke: 2px #d5dbe6;
    paint-order: stroke;
}

.g-blue { color: #4285f4; }
.g-red { color: #ea4335; }
.g-yellow { color: #fbbc05; }
.g-green { color: #34a853; }

.legal {
    position: absolute;
    right: 0;
    bottom: 0;
    display: flex;
    gap: 1px;
    font-size: 10px;
    line-height: 14px;
    color: #000;
}

.legal > * {
    padding: 0 5px;
    border: 0;
    background: rgba(245, 245, 245, 0.7);
}
```
